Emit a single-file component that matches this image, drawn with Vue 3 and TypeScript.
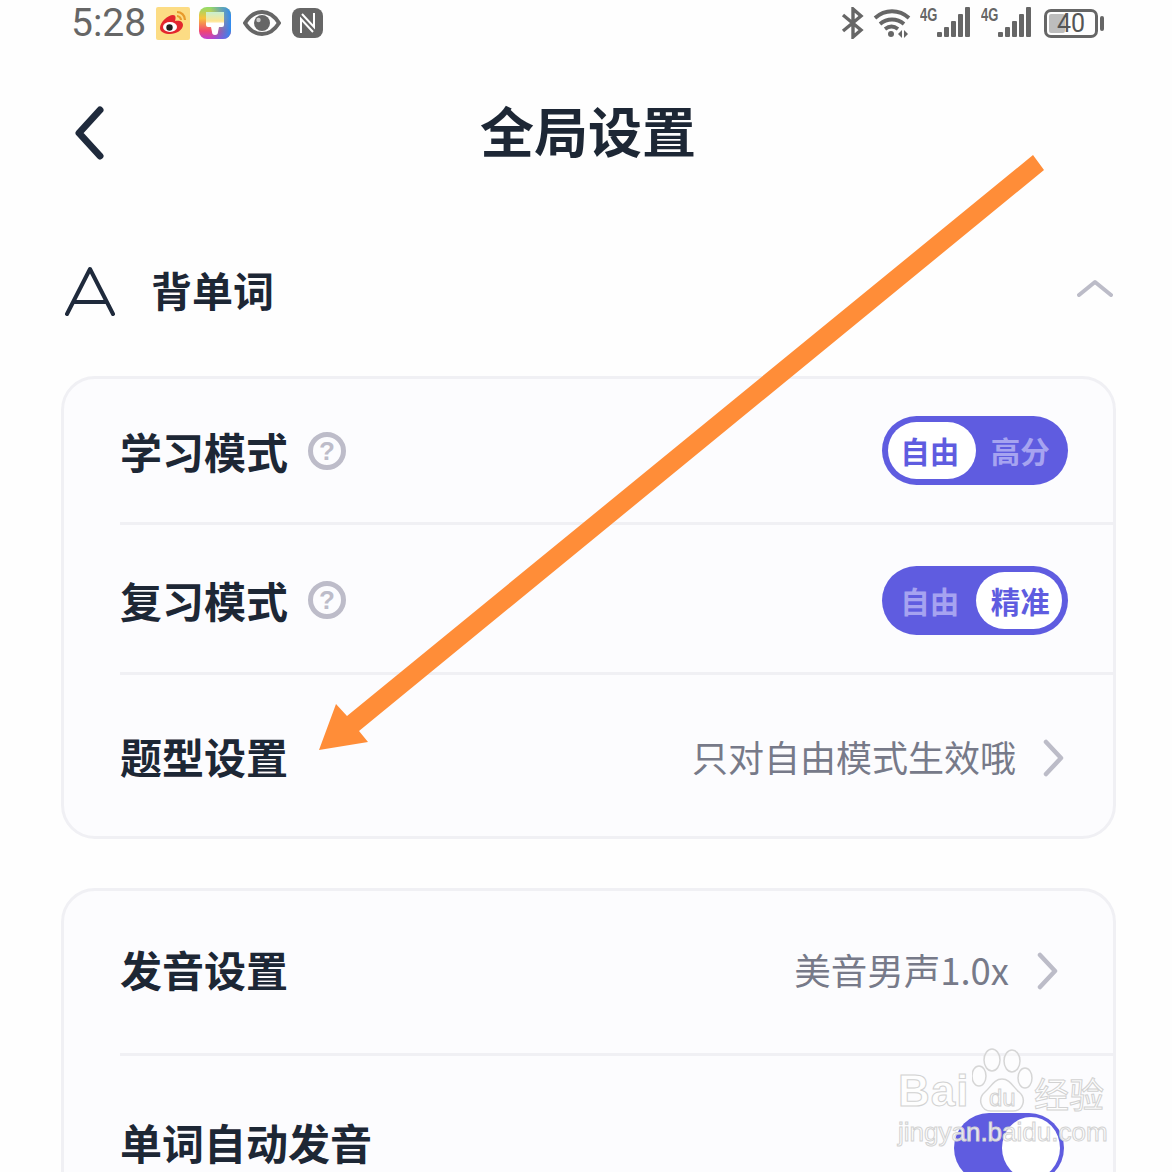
<script setup lang="ts">
const bars = [5, 10, 16, 23, 30]
</script>

<template>
  <div class="page">
    <div class="status">
      <div class="status-left">
        <span class="time">5:28</span>
        <svg class="ic-weibo" width="34" height="33" viewBox="0 0 34 33">
          <rect width="34" height="33" rx="2" fill="#fcdc84" />
          <path d="M4 21c0-6 8-13 13-13 3 0 3 3 2 6 4-1 8 0 8 4 0 5-7 9-13 9-5 0-10-2-10-6z" fill="#e3262e" />
          <ellipse cx="14" cy="20" rx="7" ry="5" fill="#fff" />
          <circle cx="13.500" cy="20.500" r="3.200" fill="#222" />
          <path d="M21 5c4 0 8 3 8 8M21 9c2 0 4 2 4 4" fill="none" stroke="#e89a2c" stroke-width="2.200" />
        </svg>
        <svg class="ic-paint" width="32" height="32" viewBox="0 0 32 32">
          <defs>
            <linearGradient id="pv" x1="0" y1="0" x2="0" y2="1">
              <stop offset="0" stop-color="#8fdc6a" />
              <stop offset="0.35" stop-color="#f8c23c" />
              <stop offset="0.75" stop-color="#f2476f" />
              <stop offset="1" stop-color="#c03fd0" />
            </linearGradient>
            <linearGradient id="ph" x1="0" y1="0" x2="1" y2="0">
              <stop offset="0.35" stop-color="#3d6df2" stop-opacity="0" />
              <stop offset="1" stop-color="#2f8cf0" stop-opacity="1" />
            </linearGradient>
            <linearGradient id="pb" x1="0" y1="0" x2="0" y2="1">
              <stop offset="0" stop-color="#c8f0d0" />
              <stop offset="0.4" stop-color="#ffe58f" />
              <stop offset="0.5" stop-color="#fff" />
            </linearGradient>
          </defs>
          <rect width="32" height="32" rx="8" fill="url(#pv)" />
          <rect width="32" height="32" rx="8" fill="url(#ph)" />
          <path d="M7 5h18v13a2 2 0 0 1-2 2h-3l-1 5a3 3 0 0 1-6 0l-1-5H9a2 2 0 0 1-2-2z" fill="url(#pb)" />
        </svg>
        <svg class="ic-eye" width="38" height="26" viewBox="0 0 38 26">
          <path d="M2 13C7 5 13 2 19 2s12 3 17 11c-5 8-11 11-17 11S7 21 2 13z" fill="none" stroke="#666" stroke-width="4" />
          <circle cx="19" cy="13" r="8" fill="#666" />
          <circle cx="15.500" cy="10" r="2.200" fill="#ccc" />
        </svg>
        <svg class="ic-nfc" width="31" height="30" viewBox="0 0 31 30">
          <rect width="31" height="30" rx="8" fill="#666" />
          <path d="M9 25V11l12 13M22 5v14L10 6" fill="none" stroke="#fff" stroke-width="2" />
        </svg>
      </div>
      <div class="status-right">
        <svg class="ic-bt" width="23" height="32" viewBox="0 0 23 32">
          <path d="M2 8l18 15-8 7V2l8 7L2 24" fill="none" stroke="#666" stroke-width="3.400" />
        </svg>
        <svg class="ic-wifi" width="38" height="30" viewBox="0 0 38 30">
          <g fill="none" stroke="#666" stroke-width="3.800">
            <path d="M2 10c10-9 24-9 34 0" />
            <path d="M7 16c7-6 17-6 24 0" />
            <path d="M12 21c4-3 9-3 13 0" />
          </g>
          <circle cx="18" cy="26" r="3" fill="#666" />
          <path d="M29 22l-4 4 4 4zM31 22l4 4-4 4z" fill="#666" />
        </svg>
        <div v-for="n in 2" :key="n" class="signal">
          <span class="net">4G</span>
          <div class="bars">
            <i v-for="h in bars" :key="h" :style="{ height: h + 'px' }"></i>
          </div>
        </div>
        <div class="battery">
          <div class="battery-box">
            <span class="battery-fill"></span>
            <span class="battery-num">40</span>
          </div>
          <span class="battery-nub"></span>
        </div>
      </div>
    </div>

    <div class="header">
      <svg class="back" width="30" height="54" viewBox="0 0 30 54">
        <path d="M26 4L5 27l21 23" fill="none" stroke="#1f2a3c" stroke-width="7" stroke-linecap="round" stroke-linejoin="round" />
      </svg>
      <h1>全局设置</h1>
    </div>

    <div class="section-head">
      <svg width="50" height="50" viewBox="0 0 50 50">
        <path d="M2 48L25 3l23 45M10 36h30" fill="none" stroke="#1f2a3c" stroke-width="4" stroke-linecap="round" stroke-linejoin="round" />
      </svg>
      <h2>背单词</h2>
      <svg class="collapse" width="36" height="18" viewBox="0 0 36 18">
        <path d="M2 16L18 3l16 13" fill="none" stroke="#bcbcc8" stroke-width="4" stroke-linecap="round" stroke-linejoin="round" />
      </svg>
    </div>

    <div class="card">
      <div class="row row-a">
        <span class="label">学习模式</span>
        <span class="help">?</span>
        <div class="toggle">
          <span class="opt on">自由</span>
          <span class="opt">高分</span>
        </div>
      </div>
      <div class="row row-b">
        <span class="label">复习模式</span>
        <span class="help">?</span>
        <div class="toggle">
          <span class="opt">自由</span>
          <span class="opt on">精准</span>
        </div>
      </div>
      <div class="row row-c">
        <span class="label">题型设置</span>
        <span class="value">只对自由模式生效哦</span>
        <svg class="more" width="22" height="38" viewBox="0 0 22 38">
          <path d="M3 3l15 16L3 35" fill="none" stroke="#bcbcc8" stroke-width="4.500" stroke-linecap="round" stroke-linejoin="round" />
        </svg>
      </div>
    </div>

    <div class="card card-second">
      <div class="row row-d">
        <span class="label">发音设置</span>
        <span class="value">美音男声1.0x</span>
        <svg class="more more-d" width="22" height="38" viewBox="0 0 22 38">
          <path d="M3 3l15 16L3 35" fill="none" stroke="#bcbcc8" stroke-width="4.500" stroke-linecap="round" stroke-linejoin="round" />
        </svg>
      </div>
      <div class="row row-e">
        <span class="label">单词自动发音</span>
        <div class="switch"><span class="knob"></span></div>
      </div>
    </div>

    <svg class="arrow" width="1172" height="1172" viewBox="0 0 1172 1172">
      <path d="M1044 170L1033 155L347 716L336 704L319 750L368 742L359 731Z" fill="#ff8d38" />
    </svg>

    <div class="watermark">
      <div class="wm-top">
        <span class="wm-bai">Bai</span>
        <div class="wm-paw">
          <svg width="62" height="68" viewBox="0 0 62 68">
            <g fill="#fff" fill-opacity="0.4" stroke="#d6d6d6" stroke-width="1.500">
              <ellipse cx="20" cy="13" rx="8" ry="11" />
              <ellipse cx="40" cy="14" rx="8" ry="11" />
              <ellipse cx="7" cy="29" rx="7" ry="10" />
              <ellipse cx="53" cy="31" rx="7" ry="10" />
              <path d="M30 32c8 0 11 8 17 13 8 7 4 19-6 19H19C9 64 5 52 13 45c6-5 9-13 17-13z" />
            </g>
          </svg>
          <span class="wm-du">du</span>
        </div>
        <span class="wm-cn">经验</span>
      </div>
      <div class="wm-url">jingyan.baidu.com</div>
    </div>
  </div>
</template>

<style scoped>
.page {
  position: relative;
  width: 1172px;
  height: 1172px;
  overflow: hidden;
  background: #fefefe;
  font-family: "Noto Sans CJK SC", "Noto Sans", sans-serif;
  color: #1d2735;
}

.status {
  display: flex;
  justify-content: space-between;
  align-items: center;
  height: 46px;
  padding: 0 68px 0 71px;
}

.status-left,
.status-right {
  display: flex;
  align-items: center;
}

.time {
  font-family: Roboto, sans-serif;
  font-size: 39px;
  line-height: 46px;
  color: #666;
  width: 85px;
}

.ic-paint {
  margin-left: 9px;
}

.ic-eye {
  margin-left: 12px;
}

.ic-nfc {
  margin-left: 11px;
}

.ic-wifi {
  margin-left: 9px;
}

.signal {
  position: relative;
  display: flex;
  align-items: flex-end;
  width: 50px;
  height: 30px;
  margin-left: 9px;
  margin-bottom: 2px;
}

.signal + .signal {
  margin-left: 11px;
}

.net {
  position: absolute;
  left: 0;
  top: -1px;
  font-family: "Liberation Sans", sans-serif;
  font-size: 18px;
  line-height: 18px;
  font-weight: 700;
  color: #666;
  transform: scaleX(0.72);
  transform-origin: left;
}

.bars {
  display: flex;
  align-items: flex-end;
  gap: 2.500px;
  margin-left: 17px;
}

.bars i {
  display: block;
  width: 4.500px;
  background: #666;
  border-radius: 1px;
}

.battery {
  display: flex;
  align-items: center;
  margin-left: 13px;
}

.battery-box {
  position: relative;
  width: 54px;
  height: 29px;
  border: 3px solid #666;
  border-radius: 7px;
  box-sizing: border-box;
  text-align: center;
}

.battery-fill {
  position: absolute;
  left: 2px;
  top: 2px;
  bottom: 2px;
  width: 16px;
  background: #bdbdbd;
  border-radius: 2px;
}

.battery-num {
  position: relative;
  font-family: Roboto, sans-serif;
  font-size: 25px;
  line-height: 23px;
  display: block;
  color: #555;
}

.battery-nub {
  width: 4px;
  height: 15px;
  margin-left: 2px;
  background: #666;
  border-radius: 2px;
}

.header {
  position: relative;
  display: flex;
  justify-content: center;
  align-items: center;
  height: 174px;
  padding-left: 4px;
}

.back {
  position: absolute;
  left: 74px;
  top: 60px;
}

.header h1 {
  margin: 0 0 6px;
  font-size: 54px;
  line-height: 80px;
  font-weight: 700;
}

.section-head {
  display: flex;
  align-items: center;
  height: 156px;
  padding: 0 59px 14px 65px;
  box-sizing: border-box;
}

.section-head h2 {
  margin: 0 0 4px 36px;
  font-size: 41px;
  font-weight: 700;
}

.collapse {
  margin-left: auto;
  margin-top: -6px;
}

.card {
  width: 1055px;
  margin-left: 61px;
  padding-left: 56px;
  box-sizing: border-box;
  background: #fcfcfe;
  border: 3px solid #f0f0f4;
  border-radius: 34px;
}

.card-second {
  margin-top: 49px;
  height: 400px;
}

.row {
  display: flex;
  align-items: center;
  box-sizing: border-box;
  padding-right: 45px;
  border-bottom: 3px solid #f0f0f4;
}

.row:last-child {
  border-bottom: 0;
}

.row-a {
  height: 146px;
}

.row-b {
  height: 150px;
  padding-top: 3px;
}

.row-c {
  height: 161px;
  padding-top: 1px;
}

.row-d {
  height: 165px;
  padding-bottom: 6px;
}

.row-e {
  height: 180px;
  padding-bottom: 8px;
}

.label {
  font-size: 42px;
  font-weight: 700;
  line-height: 56px;
}

.help {
  width: 38px;
  height: 38px;
  margin-left: 20px;
  box-sizing: border-box;
  border: 5px solid #bdbcc9;
  border-radius: 50%;
  font-family: "Liberation Sans", sans-serif;
  font-size: 26px;
  font-weight: 700;
  line-height: 28px;
  text-align: center;
  color: #bdbcc9;
}

.toggle {
  display: flex;
  margin-left: auto;
  width: 186px;
  height: 69px;
  padding: 6px;
  box-sizing: border-box;
  border-radius: 35px;
  background: #5f5ce0;
}

.opt {
  flex: 1 1 0;
  border-radius: 29px;
  font-size: 29.500px;
  font-weight: 700;
  line-height: 57px;
  text-align: center;
  color: #a6a3f0;
}

.opt:first-child {
  padding-right: 4px;
}

.opt:last-child {
  padding-left: 3px;
}

.opt.on {
  background: #fff;
  color: #5f5ce0;
}

.value {
  margin-left: auto;
  font-size: 36px;
  font-weight: 400;
  color: #777a89;
}

.more {
  margin-left: 27px;
  margin-right: 3px;
  margin-top: 4px;
}

.more-d {
  margin-left: 28px;
  margin-right: 9px;
}

.row-d .value {
  font-size: 36.500px;
}

.switch {
  display: flex;
  justify-content: flex-end;
  margin: 12px 4px 0 auto;
  width: 110px;
  height: 70px;
  padding: 4px;
  box-sizing: border-box;
  border-radius: 35px;
  background: #5f5ce0;
}

.knob {
  width: 58px;
  height: 62px;
  border-radius: 50%;
  background: #fff;
}

.arrow {
  position: absolute;
  left: 0;
  top: 0;
}

.watermark {
  position: absolute;
  left: 898px;
  top: 1043px;
  width: 212px;
  font-family: "Liberation Sans", sans-serif;
  color: rgba(255, 255, 255, 0.9);
  -webkit-text-stroke: 1px #d2d2d2;
}

.wm-top {
  display: flex;
  align-items: flex-end;
  height: 72px;
}

.wm-bai {
  font-size: 44px;
  line-height: 48px;
  font-weight: 700;
  letter-spacing: 1px;
  width: 74px;
}

.wm-paw {
  position: relative;
  width: 62px;
  height: 68px;
}

.wm-du {
  position: absolute;
  left: 17px;
  top: 38px;
  font-size: 24px;
  line-height: 26px;
}

.wm-cn {
  font-family: "Noto Sans CJK SC", sans-serif;
  font-size: 35px;
  line-height: 44px;
}

.wm-url {
  margin-top: 3px;
  font-size: 26px;
  line-height: 28px;
  white-space: nowrap;
}
</style>
